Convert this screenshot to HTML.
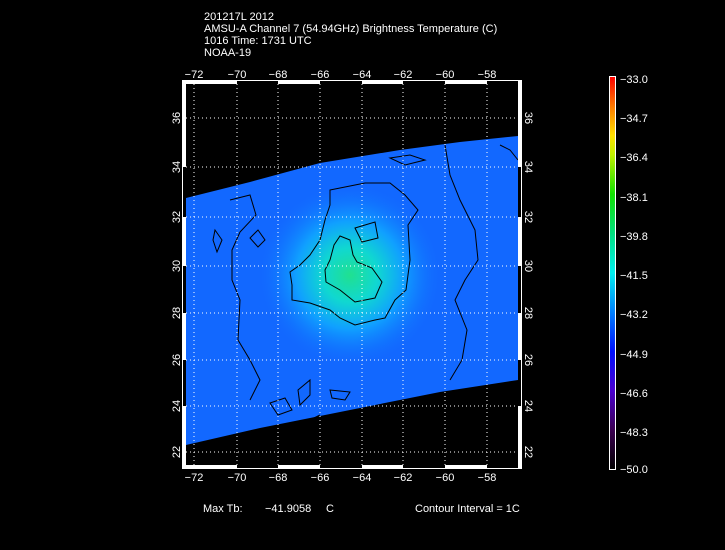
<!DOCTYPE html>
<html><head><meta charset="utf-8"><style>
html,body{margin:0;padding:0;background:#000;width:725px;height:550px;overflow:hidden}
svg{display:block}
text{font-family:"Liberation Sans",sans-serif;fill:#fff;font-size:11px}
</style></head><body>
<svg width="725" height="550" viewBox="0 0 725 550" xmlns="http://www.w3.org/2000/svg">
<defs>
<linearGradient id="cb" x1="0" y1="1" x2="0" y2="0">
<stop offset="0" stop-color="#000"/>
<stop offset="0.1" stop-color="#3a0050"/>
<stop offset="0.2" stop-color="#4a00d0"/>
<stop offset="0.3" stop-color="#0010ff"/>
<stop offset="0.4" stop-color="#0080ff"/>
<stop offset="0.5" stop-color="#00f0f0"/>
<stop offset="0.6" stop-color="#00e080"/>
<stop offset="0.7" stop-color="#10e000"/>
<stop offset="0.8" stop-color="#c0f000"/>
<stop offset="0.85" stop-color="#ffe000"/>
<stop offset="0.92" stop-color="#ff8000"/>
<stop offset="1" stop-color="#ff0000"/>
</linearGradient>
<radialGradient id="blob" cx="350" cy="275" r="90" gradientUnits="userSpaceOnUse">
<stop offset="0" stop-color="#20e090"/>
<stop offset="0.3" stop-color="#10d8d0"/>
<stop offset="0.6" stop-color="#10a0ff"/>
<stop offset="1" stop-color="#1070ff" stop-opacity="0"/>
</radialGradient>
<clipPath id="pc"><rect x="186" y="84" width="332" height="381"/></clipPath>
</defs>
<text x="204" y="20">201217L 2012</text>
<text x="204" y="32">AMSU-A Channel 7 (54.94GHz) Brightness Temperature (C)</text>
<text x="204" y="44">1016 Time: 1731 UTC</text>
<text x="204" y="56">NOAA-19</text>
<g clip-path="url(#pc)">
<polygon points="186,198 250,182 320,163 400,150 460,142 518,136 518,380 440,392 350,410 260,428 186,445" fill="#1268ff"/>
<polygon points="186,198 250,182 320,163 400,150 460,142 518,136 518,380 440,392 350,410 260,428 186,445" fill="url(#blob)"/>
<g fill="none" stroke="#000" stroke-width="1">
<path d="M330,190 L365,183 L390,183 L405,195 L418,210 L408,225 L410,260 L406,290 L395,300 L385,318 L375,320 L355,325 L340,318 L330,310 L310,303 L292,300 L292,285 L290,272 L300,265 L310,255 L320,240 L325,220 L330,205 Z"/>
<path d="M340,236 L350,240 L353,255 L357,262 L372,268 L382,282 L375,298 L355,302 L340,290 L326,282 L325,270 L330,260 L334,245 Z"/>
<path d="M355,228 L375,222 L378,238 L362,242 Z"/>
<path d="M230,200 L250,195 L256,215 L240,232 L232,250 L232,280 L240,300 L238,340 L250,360 L260,380 L250,400"/>
<path d="M445,145 L450,175 L460,200 L475,230 L478,260 L465,280 L455,300 L467,330 L462,360 L450,380"/>
<path d="M215,230 L222,240 L217,252 L213,240 Z"/>
<path d="M390,158 L410,155 L425,160 L405,165 Z"/>
<path d="M258,230 L265,240 L258,247 L250,238 Z"/>
<path d="M500,145 L510,150 L518,160"/>
<path d="M270,403 L285,398 L292,410 L278,415 Z"/>
<path d="M298,390 L310,380 L310,395 L300,405 Z"/>
<path d="M330,390 L350,392 L345,400 L332,398 Z"/>
<path d="M300,425 L320,415"/>
</g>
</g>
<g stroke="#fff" stroke-width="1" stroke-dasharray="1,3" fill="none">
<path d="M194,84V465M237,84V465M278,84V465M320,84V465M362,84V465M403,84V465M445,84V465M487,84V465"/>
<path d="M186,118H518M186,167H518M186,217H518M186,266H518M186,313H518M186,360H518M186,406H518M186,452H518"/>
</g>
<rect x="182.5" y="80.5" width="339" height="388" fill="none" stroke="#fff"/>
<rect x="183" y="81" width="3" height="387" fill="#fff"/>
<rect x="518" y="81" width="3" height="387" fill="#fff"/>
<rect x="183" y="81" width="337" height="3" fill="#fff"/>
<rect x="183" y="465" width="337" height="3" fill="#fff"/>
<g fill="#000">
<rect x="183" y="167" width="3" height="50"/><rect x="183" y="266" width="3" height="47"/><rect x="183" y="360" width="3" height="46"/>
<rect x="518" y="167" width="3" height="50"/><rect x="518" y="266" width="3" height="47"/><rect x="518" y="360" width="3" height="46"/>
<rect x="237" y="81" width="41" height="3"/><rect x="320" y="81" width="42" height="3"/><rect x="403" y="81" width="42" height="3"/><rect x="487" y="81" width="31" height="3"/>
<rect x="237" y="465" width="41" height="3"/><rect x="320" y="465" width="42" height="3"/><rect x="403" y="465" width="42" height="3"/><rect x="487" y="465" width="31" height="3"/>
</g>
<g text-anchor="middle">
<text x="194" y="78">−72</text><text x="237" y="78">−70</text><text x="278" y="78">−68</text><text x="320" y="78">−66</text><text x="362" y="78">−64</text><text x="403" y="78">−62</text><text x="445" y="78">−60</text><text x="487" y="78">−58</text>
<text x="194" y="481">−72</text><text x="237" y="481">−70</text><text x="278" y="481">−68</text><text x="320" y="481">−66</text><text x="362" y="481">−64</text><text x="403" y="481">−62</text><text x="445" y="481">−60</text><text x="487" y="481">−58</text>
</g>
<g text-anchor="middle">
<text transform="translate(180,118) rotate(-90)">36</text><text transform="translate(180,167) rotate(-90)">34</text><text transform="translate(180,217) rotate(-90)">32</text><text transform="translate(180,266) rotate(-90)">30</text><text transform="translate(180,313) rotate(-90)">28</text><text transform="translate(180,360) rotate(-90)">26</text><text transform="translate(180,406) rotate(-90)">24</text><text transform="translate(180,452) rotate(-90)">22</text>
<text transform="translate(525,118) rotate(90)">36</text><text transform="translate(525,167) rotate(90)">34</text><text transform="translate(525,217) rotate(90)">32</text><text transform="translate(525,266) rotate(90)">30</text><text transform="translate(525,313) rotate(90)">28</text><text transform="translate(525,360) rotate(90)">26</text><text transform="translate(525,406) rotate(90)">24</text><text transform="translate(525,452) rotate(90)">22</text>
</g>
<rect x="609.5" y="76.5" width="6" height="393" fill="url(#cb)" stroke="#fff"/>
<g>
<text x="620" y="83">−33.0</text><text x="620" y="122">−34.7</text><text x="620" y="161">−36.4</text><text x="620" y="201">−38.1</text><text x="620" y="240">−39.8</text><text x="620" y="279">−41.5</text><text x="620" y="318">−43.2</text><text x="620" y="358">−44.9</text><text x="620" y="397">−46.6</text><text x="620" y="436">−48.3</text><text x="620" y="473">−50.0</text>
</g>
<text x="203" y="512">Max Tb:</text>
<text x="265" y="512">−41.9058</text>
<text x="326" y="512">C</text>
<text x="415" y="512">Contour Interval = 1C</text>
</svg>
</body></html>
